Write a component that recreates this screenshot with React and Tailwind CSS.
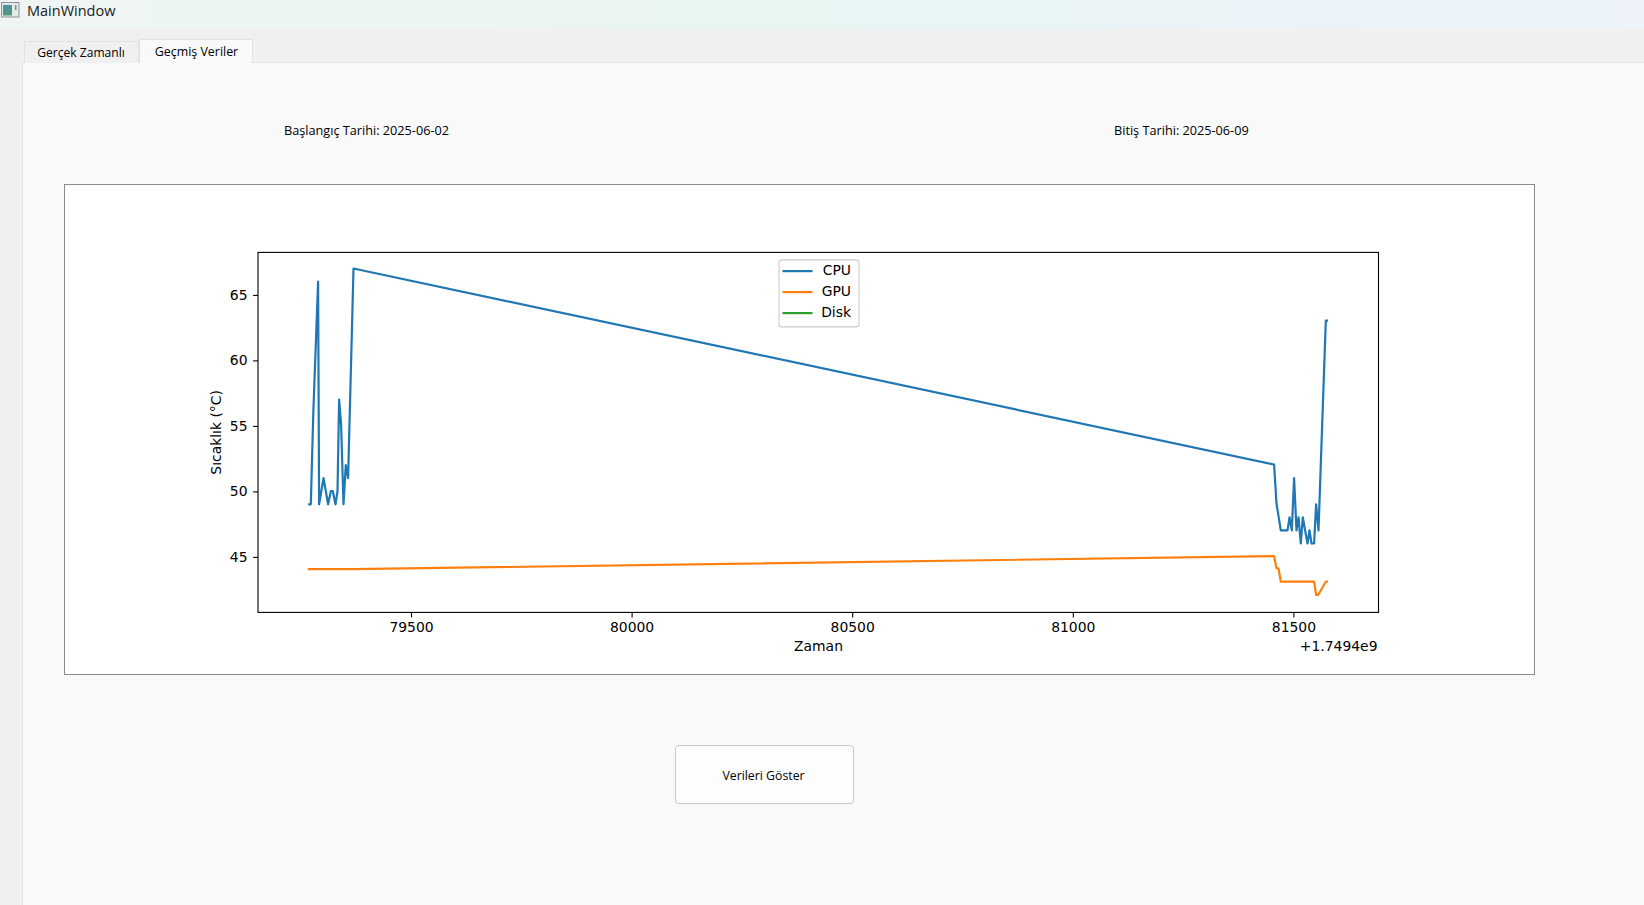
const cpu = "307.3,504.6 310,504.6 312.5,413 317.3,282 318.3,504.6 322.7,478.4 327.3,504.6 330,491.5 332,491.5 334.7,504.6 336.7,491.5 338.3,399.8 340.3,425 342.7,504.6 345,465.3 347.3,478.4 352.7,268.8 1273.3,464.8 1275.7,504 1280,530.7 1286.7,530.7 1288.7,517.6 1291,530.7 1293.3,478.4 1295.7,530.7 1297.7,517.6 1300,543.8 1302,517.6 1304.3,530.7 1306.7,543.8 1308.7,530.7 1310.7,543.8 1313.3,543.8 1315.3,504.6 1317.7,530.7 1325,321 1327.3,321";
const gpu = "307,569.5 352.7,569.5 1273.3,556.4 1275.7,568.7 1277.7,568.7 1280,582 1313.3,582 1315.3,595.3 1317.3,595.3 1325,582 1327.3,582";

const y_ticks = [
  { label: "65", y: 295 },
  { label: "60", y: 360.5 },
  { label: "55", y: 426 },
  { label: "50", y: 491.5 },
  { label: "45", y: 557 },
];
const x_ticks = [
  { label: "79500", x: 411 },
  { label: "80000", x: 631.6 },
  { label: "80500", x: 852.2 },
  { label: "81000", x: 1072.8 },
  { label: "81500", x: 1293.4 },
];
const legend = [
  { label: "CPU", color: "#1f77b4", y: 270.7 },
  { label: "GPU", color: "#ff7f0e", y: 291.7 },
  { label: "Disk", color: "#2ca02c", y: 312.7 },
];

function Chart() {
  return (
    <svg viewBox="64.5 184.6 1469 489" className="block w-full h-full font-['DejaVu_Sans',sans-serif] text-[13.9px]">
      <rect x="257.5" y="252" width="1120.5" height="360" fill="none" stroke="#000" strokeWidth="1.1" />
      {y_ticks.map((t) => (
        <g key={t.label}>
          <line x1="252.6" x2="257.5" y1={t.y} y2={t.y} stroke="#000" strokeWidth="1.1" />
          <text x="247" y={t.y + 4.6} textAnchor="end">{t.label}</text>
        </g>
      ))}
      {x_ticks.map((t) => (
        <g key={t.label}>
          <line x1={t.x} x2={t.x} y1="612" y2="617" stroke="#000" strokeWidth="1.1" />
          <text x={t.x} y="632" textAnchor="middle">{t.label}</text>
        </g>
      ))}
      <g transform="translate(0.3 -0.7)">
        <polyline points={cpu} fill="none" stroke="#1f77b4" strokeWidth="2.2" strokeLinejoin="round" />
        <polyline points={gpu} fill="none" stroke="#ff7f0e" strokeWidth="2.2" strokeLinejoin="round" />
      </g>
      <text x="818" y="651" textAnchor="middle">Zaman</text>
      <text x="1377" y="651" textAnchor="end">+1.7494e9</text>
      <text transform="translate(220 432) rotate(-90)" textAnchor="middle">Sıcaklık (°C)</text>
      <rect x="778.5" y="259.5" width="80" height="67" rx="3" fill="#fff" fillOpacity="0.8" stroke="#ccc" strokeWidth="1.1" />
      {legend.map((l) => (
        <g key={l.label}>
          <line x1="782" x2="812" y1={l.y} y2={l.y} stroke={l.color} strokeWidth="2.2" />
          <text x="850.5" y={l.y + 4.4} textAnchor="end">{l.label}</text>
        </g>
      ))}
    </svg>
  );
}

function WindowIcon() {
  return (
    <svg width="20" height="18" viewBox="0 0 20 18" className="mt-px">
      <defs>
        <linearGradient id="icon_fill" x1="0" y1="0" x2="0" y2="1">
          <stop offset="0" stopColor="#4f8fa3" />
          <stop offset="1" stopColor="#4f9a78" />
        </linearGradient>
      </defs>
      <rect x="1.5" y="1.5" width="17.5" height="14.5" fill="#e4eaea" stroke="#8d9298" />
      <rect x="3" y="4" width="9" height="10.5" fill="url(#icon_fill)" />
      <rect x="15" y="4" width="1.5" height="5" fill="#7f8c90" />
    </svg>
  );
}

export default function App() {
  return (
    <div className="w-[1644px] h-[905px] overflow-hidden flex flex-col bg-[#f0f0f0] text-black font-['Open_Sans',sans-serif]">
      <div className="h-[29px] shrink-0 flex items-start bg-gradient-to-r from-[#eff5f2] via-[#e8f5f3] to-[#edf2fb]">
        <WindowIcon />
        <span className="ml-[7px] leading-[21px] text-[14.5px] text-[#1c1c1c]">MainWindow</span>
      </div>

      <div className="flex-1 flex flex-col pl-[22px]">
        <div className="h-[34px] shrink-0 flex items-end pl-[2px] -mb-px relative z-10">
          <div className="w-[115px] h-[22px] flex items-center justify-center pr-px bg-[#f0f0f0] border border-b-0 border-[#e2e2e2] text-[12.1px] pt-px">
            Gerçek Zamanlı
          </div>
          <div className="w-[114px] h-[24px] flex items-center justify-center pl-px pt-px bg-[#f9f9f9] border border-b-0 border-[#e2e2e2] text-[12.4px]">
            Geçmiş Veriler
          </div>
        </div>

        <div className="flex-1 flex flex-col bg-[#f9f9f9] border-t border-l border-[#e2e2e2]">
          <div className="flex h-[121px] pt-[14px] items-center text-[12.7px]">
            <div className="ml-[261px] w-[830px]">Başlangıç Tarihi: 2025-06-02</div>
            <div>Bitiş Tarihi: 2025-06-09</div>
          </div>
          <div className="ml-[41px] w-[1471px] h-[491px] bg-white border border-[#878c93]">
            <Chart />
          </div>
          <div className="ml-[652px] mt-[70px] w-[179px] h-[59px] flex items-center justify-center pt-[4px] pr-[2px] bg-[#fdfdfd] border border-[#c9c9c9] rounded-[4px] text-[12.3px]">
            Verileri Göster
          </div>
        </div>
      </div>
    </div>
  );
}
